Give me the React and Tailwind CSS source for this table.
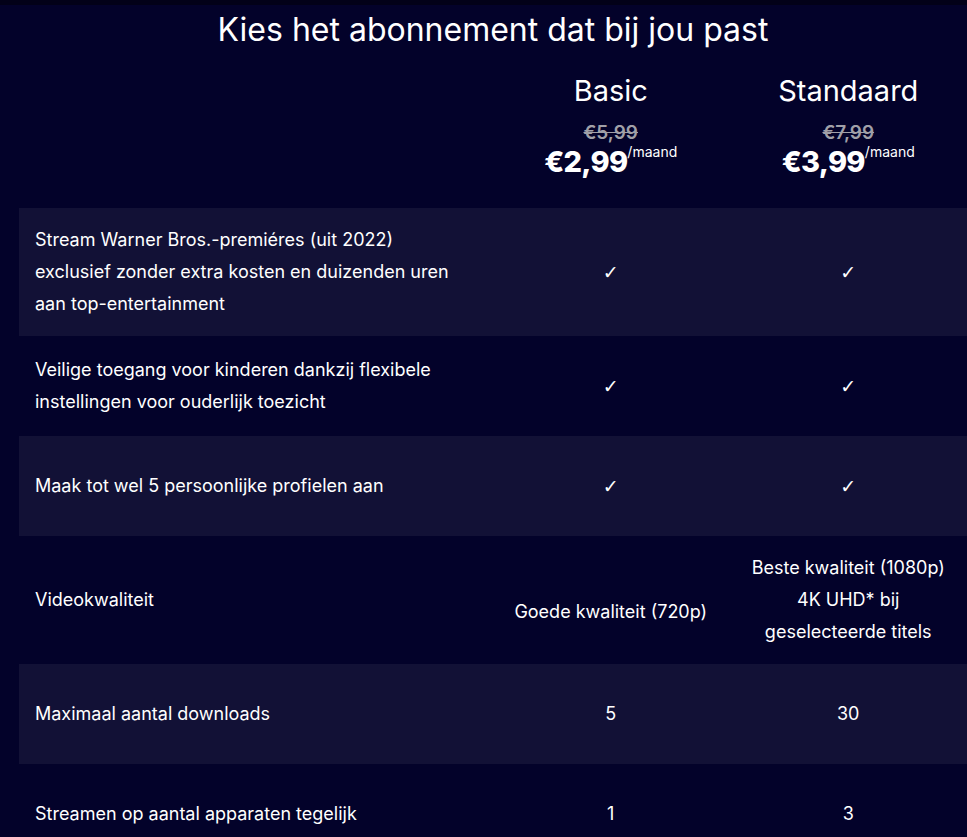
import React from 'react';

const rows = [
  {
    label: ['Stream Warner Bros.-premiéres (uit 2022)', 'exclusief zonder extra kosten en duizenden uren', 'aan top-entertainment'],
    basic: ['✓'],
    standard: ['✓'],
    check: true,
  },
  {
    label: ['Veilige toegang voor kinderen dankzij flexibele', 'instellingen voor ouderlijk toezicht'],
    basic: ['✓'],
    standard: ['✓'],
    check: true,
  },
  { label: ['Maak tot wel 5 persoonlijke profielen aan'], basic: ['✓'], standard: ['✓'], check: true },
  {
    label: ['Videokwaliteit'],
    basic: ['Goede kwaliteit (720p)'],
    basicOffset: true,
    standard: ['Beste kwaliteit (1080p)', '4K UHD* bij', 'geselecteerde titels'],
  },
  { label: ['Maximaal aantal downloads'], basic: ['5'], standard: ['30'] },
  { label: ['Streamen op aantal apparaten tegelijk'], basic: ['1'], standard: ['3'] },
];

const plans = [
  { name: 'Basic', old: '€5,99', price: '€2,99' },
  { name: 'Standaard', old: '€7,99', price: '€3,99' },
];

const Lines = ({ lines }) => lines.map((l, i) => <div key={i}>{l}</div>);

const PlanHeader = ({ name, old, price }) => (
  <div className="w-[238px] flex flex-col items-center">
    <div className="text-[29px] leading-[36px] text-white">{name}</div>
    <div className="mt-[12px] text-[19px] leading-[24px] font-semibold text-[#a0a0a8] line-through">{old}</div>
    <div className="flex items-start text-white">
      <span className="text-[29px] leading-[34px] font-extrabold tracking-tight">{price}</span>
      <span className="text-[14px] leading-[18px] mt-[-2px]">/maand</span>
    </div>
  </div>
);

const Row = ({ row, shaded }) => {
  const val = row.check ? "font-['DejaVu_Sans',sans-serif] text-[19px]" : 'text-[18px]';
  return (
    <div className={`flex items-center min-h-[100px] py-4 ${shaded ? 'bg-[#121136]' : ''}`}>
      <div className="w-[474px] pl-4 text-[18px] leading-[32px] text-white">
        <Lines lines={row.label} />
      </div>
      <div className={`w-[238px] text-center leading-[32px] text-white ${val} ${row.basicOffset ? 'pt-6' : ''}`}>
        <Lines lines={row.basic} />
      </div>
      <div className={`w-[238px] text-center leading-[32px] text-white ${val}`}>
        <Lines lines={row.standard} />
      </div>
    </div>
  );
};

export default function App() {
  return (
    <div className="min-h-[837px] bg-[#03022a] font-['Inter',sans-serif] overflow-hidden">
      <div className="h-[5px] bg-[#020118]" />
      <div className="pl-[19px]">
        <h1 className="h-[55px] text-center text-[32px] leading-[50px] text-white w-[948px]">
          Kies het abonnement dat bij jou past
        </h1>
        <div className="flex h-[148px] pt-[13px]">
          <div className="w-[474px]" />
          {plans.map((p) => (
            <PlanHeader key={p.name} {...p} />
          ))}
        </div>
        {rows.map((r, i) => (
          <Row key={i} row={r} shaded={i % 2 === 0} />
        ))}
      </div>
    </div>
  );
}
